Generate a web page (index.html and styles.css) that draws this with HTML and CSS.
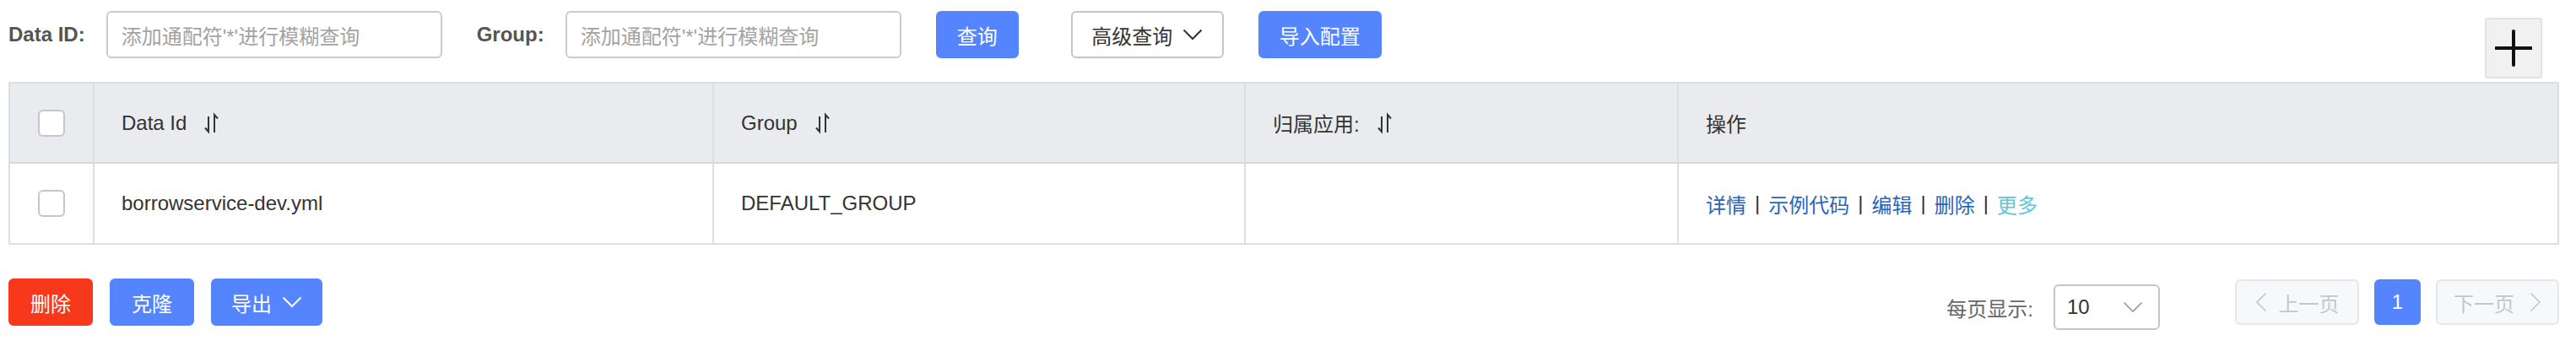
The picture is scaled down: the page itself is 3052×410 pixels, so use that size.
FILE: index.html
```html
<!DOCTYPE html>
<html lang="zh-CN">
<head>
<meta charset="utf-8">
<title>配置列表</title>
<link rel="stylesheet" href="styles.css">
</head>
<body>
<div class="page">
  <div class="toolbar">
    <span class="label">Data ID:</span>
    <div class="field"><span class="placeholder">添加通配符'*'进行模糊查询</span></div>
    <span class="label">Group:</span>
    <div class="field"><span class="placeholder">添加通配符'*'进行模糊查询</span></div>
    <button class="btn primary btn-query">查询</button>
    <button class="btn normal btn-adv">高级查询<svg class="chev" width="24" height="14" viewBox="0 0 24 14"><polyline points="1.5,1.5 12,12 22.5,1.5" fill="none" stroke="currentColor" stroke-width="2"/></svg></button>
    <button class="btn primary btn-import">导入配置</button>
    <button class="plus-btn" aria-label="新建"><svg width="44" height="44" viewBox="0 0 44 44"><line x1="1" y1="22" x2="43" y2="22" stroke="#111" stroke-width="4" stroke-linecap="round"/><line x1="22" y1="2" x2="22" y2="42" stroke="#111" stroke-width="4" stroke-linecap="round"/></svg></button>
  </div>

  <div class="table">
    <div class="cell head check"><span class="checkbox"></span></div>
    <div class="cell head">Data Id<svg class="sort" width="20" height="26" viewBox="0 0 20 26"><path d="M6 5 V23 L2 18.5" fill="none" stroke="#333" stroke-width="2"/><path d="M13 24 V3 L17 7.5" fill="none" stroke="#333" stroke-width="2"/></svg></div>
    <div class="cell head">Group<svg class="sort" width="20" height="26" viewBox="0 0 20 26"><path d="M6 5 V23 L2 18.5" fill="none" stroke="#333" stroke-width="2"/><path d="M13 24 V3 L17 7.5" fill="none" stroke="#333" stroke-width="2"/></svg></div>
    <div class="cell head">归属应用:<svg class="sort" width="20" height="26" viewBox="0 0 20 26"><path d="M6 5 V23 L2 18.5" fill="none" stroke="#333" stroke-width="2"/><path d="M13 24 V3 L17 7.5" fill="none" stroke="#333" stroke-width="2"/></svg></div>
    <div class="cell head">操作</div>

    <div class="cell body check"><span class="checkbox"></span></div>
    <div class="cell body">borrowservice-dev.yml</div>
    <div class="cell body">DEFAULT_GROUP</div>
    <div class="cell body"></div>
    <div class="cell body ops">
      <a class="link">详情</a><span class="sep">|</span><a class="link">示例代码</a><span class="sep">|</span><a class="link">编辑</a><span class="sep">|</span><a class="link">删除</a><span class="sep">|</span><a class="link more">更多</a>
    </div>
  </div>

  <div class="footer">
    <div class="actions">
      <button class="btn danger btn-del">删除</button>
      <button class="btn primary btn-clone">克隆</button>
      <button class="btn primary btn-export">导出<svg class="chev" width="24" height="14" viewBox="0 0 24 14"><polyline points="1.5,1.5 12,12 22.5,1.5" fill="none" stroke="currentColor" stroke-width="2"/></svg></button>
    </div>
    <div class="pager">
      <div class="page-size">
        <span class="ps-label">每页显示:</span>
        <div class="select"><span>10</span><svg class="chev sel-chev" width="24" height="14" viewBox="0 0 24 14"><polyline points="1.5,1.5 12,12 22.5,1.5" fill="none" stroke="currentColor" stroke-width="1.6"/></svg></div>
      </div>
      <button class="pg-btn disabled prev"><svg width="14" height="24" viewBox="0 0 14 24"><polyline points="12.5,1.5 2,12 12.5,22.5" fill="none" stroke="currentColor" stroke-width="1.6"/></svg><span>上一页</span></button>
      <button class="pg-btn current">1</button>
      <button class="pg-btn disabled next"><span>下一页</span><svg width="14" height="24" viewBox="0 0 14 24"><polyline points="1.5,1.5 12,12 1.5,22.5" fill="none" stroke="currentColor" stroke-width="1.6"/></svg></button>
    </div>
  </div>
</div>
</body>
</html>
```

FILE: styles.css
```css
* { box-sizing: border-box; }
html, body { margin: 0; padding: 0; background: #fff; }
body {
  font-family: "Liberation Sans", "Noto Sans CJK SC", sans-serif;
  font-size: 24px;
  color: #333;
}
.page { padding: 0 20px 0 10px; }

/* toolbar */
.toolbar {
  display: flex;
  align-items: flex-start;
  height: 97px;
  padding-top: 13px;
}
.label {
  height: 56px;
  line-height: 56px;
  font-weight: bold;
  color: #555;
  margin-right: 25px;
}
.field {
  width: 398px;
  height: 56px;
  border: 2px solid #c9cbd2;
  border-radius: 6px;
  padding-left: 16px;
  display: flex;
  align-items: center;
  margin-right: 41px;
  background: #fff;
}
.placeholder { color: #a3a3a3; white-space: nowrap; }

.btn {
  font-family: inherit;
  font-size: 24px;
  height: 56px;
  border-radius: 6px;
  border: 2px solid transparent;
  display: inline-flex;
  align-items: center;
  justify-content: center;
  padding: 0;
  cursor: pointer;
}
.btn.primary { background: #5584ff; border-color: #5584ff; color: #fff; }
.btn.normal { background: #fff; border-color: #c4c6cf; color: #333; }
.btn.danger { background: #f8381b; border-color: #f8381b; color: #fff; }
.chev { margin-left: 12px; }

.btn-query { width: 98px; margin-right: 62px; }
.btn-adv { width: 181px; margin-right: 41px; }
.btn-import { width: 146px; }

.plus-btn {
  margin-left: auto;
  margin-right: 20px;
  margin-top: 8px;
  width: 68px;
  height: 72px;
  background: #f1f1f1;
  border: 2px solid #e3e3e3;
  border-radius: 2px;
  display: flex;
  align-items: center;
  justify-content: center;
  padding: 0;
}

/* table */
.table {
  display: grid;
  grid-template-columns: 98px 734px 630px 513px 1fr;
  border: 2px solid #dcdee3;
  background: #fff;
}
.cell {
  display: flex;
  align-items: center;
  padding-left: 32px;
  border-left: 2px solid #dcdee3;
  white-space: nowrap;
}
.cell.check { border-left: 0; padding-left: 0; justify-content: center; }
.cell.head {
  height: 95px;
  background: #e9ebef;
  border-bottom: 2px solid #d6d8dd;
}
.cell.body { height: 94px; }
.checkbox {
  width: 32px;
  height: 32px;
  border: 2px solid #c4c6cf;
  border-radius: 6px;
  background: #fff;
}
.sort { margin-left: 20px; }

.link { color: #2865be; text-decoration: none; }
.link.more { color: #62c7d7; }
.sep { color: #333; margin: 0 10px; }

/* footer */
.footer {
  display: flex;
  justify-content: space-between;
  align-items: flex-start;
  margin-top: 40px;
}
.actions { display: flex; gap: 20px; }
.btn-del, .btn-clone { width: 100px; }
.btn-export { width: 132px; }

.pager { display: flex; align-items: flex-start; margin-top: 1px; }
.page-size { display: flex; align-items: center; margin-top: 6px; margin-right: 89px; }
.ps-label { color: #666; margin-right: 24px; }
.select {
  width: 126px;
  height: 54px;
  border: 2px solid #c4c6cf;
  border-radius: 6px;
  display: flex;
  align-items: center;
  justify-content: space-between;
  padding: 0 18px 0 14px;
  color: #333;
}
.sel-chev { color: #999; margin-left: 0; }

.pg-btn {
  font-family: inherit;
  font-size: 24px;
  height: 54px;
  border-radius: 6px;
  border: 2px solid #e6e7eb;
  background: #f7f8fa;
  color: #c4c6cf;
  display: inline-flex;
  align-items: center;
  justify-content: center;
  padding: 0;
}
.pg-btn.prev { width: 147px; margin-right: 18px; }
.pg-btn.prev svg { margin-right: 14px; }
.pg-btn.next { width: 146px; }
.pg-btn.next svg { margin-left: 18px; }
.pg-btn.current {
  width: 55px;
  background: #5584ff;
  border-color: #5584ff;
  color: #fff;
  margin-right: 18px;
}
```
